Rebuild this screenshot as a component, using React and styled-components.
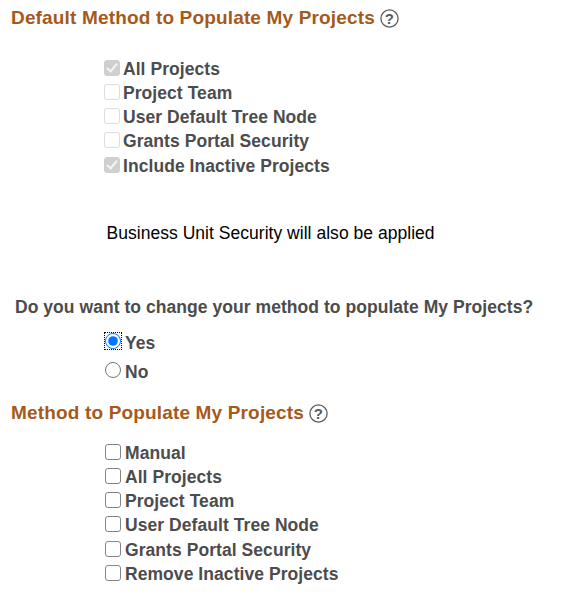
import React from "react";
import styled, { createGlobalStyle } from "styled-components";

const Global = createGlobalStyle`
  body {
    margin: 0;
    background: #fff;
    font-family: "Liberation Sans", Arial, sans-serif;
  }
`;

const Page = styled.div`
  width: 567px;
  height: 600px;
  overflow: hidden;
  display: flex;
  flex-direction: column;
`;

const Heading = styled.div`
  display: flex;
  align-items: center;
  gap: 5px;
  height: 22px;
  margin-top: ${(p) => p.$top}px;
  padding-left: 11px;
  color: #a5591b;
  font-size: 19px;
  font-weight: 700;
  letter-spacing: 0.16px;
`;

const HelpIcon = styled.svg`
  width: 19px;
  height: 19px;
  flex: none;
`;

const Options = styled.div`
  display: flex;
  flex-direction: column;
  margin-top: ${(p) => p.$top}px;
  padding-left: ${(p) => p.$left}px;
`;

const Row = styled.label`
  display: flex;
  align-items: center;
  gap: ${(p) => p.$gap}px;
  height: ${(p) => p.$height}px;
  color: #4c4c4c;
  font-size: 17.5px;
  font-weight: 700;
  letter-spacing: 0.06px;
`;

const Check = styled.input`
  appearance: none;
  position: relative;
  width: 16px;
  height: 16px;
  margin: 0 0 3px;
  flex: none;
  border: 1px solid #858585;
  border-radius: 3px;
  background: #fff;

  &:disabled {
    border-color: #dcdcdc;
  }

  &:checked {
    background: #cfcfcf;
    border-color: #cfcfcf;
  }

  &:checked::after {
    content: "";
    position: absolute;
    left: 4px;
    top: 0;
    width: 4px;
    height: 9px;
    border: solid #f4f4f4;
    border-width: 0 2px 2px 0;
    transform: rotate(40deg);
  }
`;

const Radio = styled.input`
  width: 16px;
  height: 16px;
  margin: 0 0 6px;
  flex: none;
  outline: ${(p) => (p.$focused ? "1px dotted #000" : "none")};
  outline-offset: 0;
`;

const Notice = styled.div`
  margin-top: 44px;
  padding-left: 106.5px;
  color: #000;
  font-size: 17.5px;
  line-height: 22px;
  letter-spacing: 0.03px;
`;

const Question = styled.div`
  margin-top: 52px;
  padding-left: 15px;
  color: #4c4c4c;
  font-size: 17.5px;
  font-weight: 700;
  line-height: 22px;
  letter-spacing: 0.05px;
`;

function Help() {
  return (
    <HelpIcon viewBox="0 0 19 19">
      <circle cx="9.5" cy="9.5" r="8.6" fill="none" stroke="#5a5a5a" strokeWidth="1.3" />
      <text x="9.5" y="14.8" textAnchor="middle" fontSize="15" fontFamily="Liberation Sans" fill="#5a5a5a">?</text>
    </HelpIcon>
  );
}

const defaults = [
  ["All Projects", true],
  ["Project Team", false],
  ["User Default Tree Node", false],
  ["Grants Portal Security", false],
  ["Include Inactive Projects", true],
];

const methods = ["Manual", "All Projects", "Project Team", "User Default Tree Node", "Grants Portal Security", "Remove Inactive Projects"];

export default function App() {
  return (
    <Page>
      <Global />
      <Heading $top={7}>
        Default Method to Populate My Projects
        <Help />
      </Heading>
      <Options $top={28} $left={104}>
        {defaults.map(([label, on]) => (
          <Row key={label} $gap={3} $height={24.25}>
            <Check type="checkbox" defaultChecked={on} disabled />
            {label}
          </Row>
        ))}
      </Options>
      <Notice>Business Unit Security will also be applied</Notice>
      <Question>Do you want to change your method to populate My Projects?</Question>
      <Options $top={11} $left={105}>
        <Row $gap={4} $height={29}>
          <Radio type="radio" name="change" defaultChecked $focused />
          Yes
        </Row>
        <Row $gap={4} $height={29}>
          <Radio type="radio" name="change" />
          No
        </Row>
      </Options>
      <Heading $top={15}>
        Method to Populate My Projects
        <Help />
      </Heading>
      <Options $top={17} $left={105}>
        {methods.map((label) => (
          <Row key={label} $gap={4} $height={24.2}>
            <Check type="checkbox" />
            {label}
          </Row>
        ))}
      </Options>
    </Page>
  );
}
